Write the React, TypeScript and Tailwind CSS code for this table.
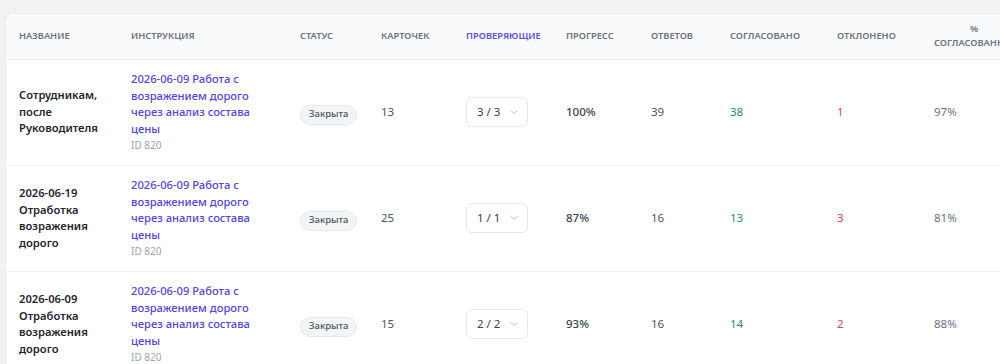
import { ChevronDown } from "lucide-react";

type Row = {
  name: string[];
  instruction: string;
  id: number;
  status: string;
  cards: number;
  reviewers: string;
  progress: string;
  answers: number;
  approved: number;
  rejected: number;
  percent: string;
};

const rows: Row[] = [
  {
    name: ["Сотрудникам,", "после", "Руководителя"],
    instruction: "2026-06-09 Работа с возражением дорого через анализ состава цены",
    id: 820,
    status: "Закрыта",
    cards: 13,
    reviewers: "3 / 3",
    progress: "100%",
    answers: 39,
    approved: 38,
    rejected: 1,
    percent: "97%",
  },
  {
    name: ["2026-06-19", "Отработка", "возражения", "дорого"],
    instruction: "2026-06-09 Работа с возражением дорого через анализ состава цены",
    id: 820,
    status: "Закрыта",
    cards: 25,
    reviewers: "1 / 1",
    progress: "87%",
    answers: 16,
    approved: 13,
    rejected: 3,
    percent: "81%",
  },
  {
    name: ["2026-06-09", "Отработка", "возражения", "дорого"],
    instruction: "2026-06-09 Работа с возражением дорого через анализ состава цены",
    id: 820,
    status: "Закрыта",
    cards: 15,
    reviewers: "2 / 2",
    progress: "93%",
    answers: 16,
    approved: 14,
    rejected: 2,
    percent: "88%",
  },
];

const th = "pl-[13px] pr-2 text-left align-middle text-[9.3px] font-semibold uppercase text-[#6b7280]";
const td = "pl-[13px] pr-2 align-middle";

export default function App() {
  return (
    <div className="h-[364px] w-[1000px] overflow-hidden bg-[#f1f2f4] pl-[5px] pt-[13px] font-['Noto_Sans',sans-serif]">
      <div className="w-[1040px] overflow-hidden rounded-tl-lg border-l border-t border-[#ebecef] bg-white">
        <table className="w-full table-fixed border-collapse">
          <colgroup>
            <col className="w-[112px]" />
            <col className="w-[169px]" />
            <col className="w-[81px]" />
            <col className="w-[85px]" />
            <col className="w-[100px]" />
            <col className="w-[85px]" />
            <col className="w-[79px]" />
            <col className="w-[107px]" />
            <col className="w-[97px]" />
            <col className="w-[125px]" />
          </colgroup>
          <thead>
            <tr className="h-[45px] border-b border-[#ebecef] bg-[#f9fafb]">
              <th className={th}>Название</th>
              <th className={th}>Инструкция</th>
              <th className={th}>Статус</th>
              <th className={th}>Карточек</th>
              <th className="pl-[13px] pr-2 text-left align-middle text-[9.3px] font-semibold uppercase text-[#5b4de0]">
                Проверяющие
              </th>
              <th className={th}>Прогресс</th>
              <th className={th}>Ответов</th>
              <th className={th}>Согласовано</th>
              <th className={th}>Отклонено</th>
              <th className="pl-[13px] pr-[32px] text-center align-middle text-[9.3px] font-semibold uppercase leading-[14px] text-[#6b7280]">
                % Согласованных
              </th>
            </tr>
          </thead>
          <tbody>
            {rows.map((r, i) => (
              <tr key={i} className="h-[106px] border-b border-[#f1f2f4]">
                <td className={`${td} pr-[13px] text-[11.2px] font-semibold leading-[16.5px] text-[#1f2430]`}>
                  {r.name.map((l) => (
                    <div key={l}>{l}</div>
                  ))}
                </td>
                <td className={`${td} pr-[28px]`}>
                  <div className="text-[11.2px] font-medium leading-[16.5px] text-[#4f46e5]">{r.instruction}</div>
                  <div className="mt-[1px] text-[10px] leading-[15px] text-[#9ca3af]">ID {r.id}</div>
                </td>
                <td className={td}>
                  <span className="inline-flex h-[20px] items-center rounded-full border border-[#e5e7eb] bg-[#f3f4f6] px-[8px] text-[9.5px] font-medium text-[#4b5563]">
                    {r.status}
                  </span>
                </td>
                <td className={`${td} text-[11.5px] text-[#4b5563]`}>{r.cards}</td>
                <td className={td}>
                  <div className="inline-flex h-[30px] w-[62px] items-center gap-[8px] rounded-md border border-[#e5e7eb] bg-white pl-[10px] text-[11.5px] text-[#374151]">
                    <span>{r.reviewers}</span>
                    <ChevronDown className="h-3 w-3 text-[#9ca3af]" strokeWidth={1.5} />
                  </div>
                </td>
                <td className={`${td} text-[11.5px] font-medium text-[#374151]`}>{r.progress}</td>
                <td className={`${td} text-[11.5px] text-[#4b5563]`}>{r.answers}</td>
                <td className={`${td} text-[11.5px] text-[#2f8a68]`}>{r.approved}</td>
                <td className={`${td} text-[11.5px] text-[#d53f5b]`}>{r.rejected}</td>
                <td className={`${td} text-[11.5px] text-[#6b7280]`}>{r.percent}</td>
              </tr>
            ))}
          </tbody>
        </table>
      </div>
    </div>
  );
}
